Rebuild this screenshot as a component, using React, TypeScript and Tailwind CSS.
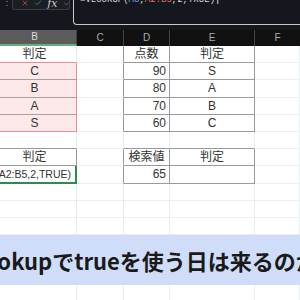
import { X, Check, ChevronDown } from "lucide-react";

type CellSpec = {
  text?: string;
  cls?: string;
  small?: boolean;
};

const grid = "border-r border-b border-r-[#e6edf3] border-b-[#eceff2]";

const base = "h-[17.2px] flex items-center leading-none text-[#333] overflow-hidden whitespace-nowrap";

// columns B..F
const rows: CellSpec[][] = [
  [
    { text: "判定", cls: "justify-center pr-[7px] border-r border-b border-r-[#e6edf3] border-b-[#f28b8b]" },
    { cls: "border-r border-b border-r-[#9a9a9a] border-b-[#eceff2]" },
    { text: "点数", cls: "justify-center border-r border-b border-[#9a9a9a]" },
    { text: "判定", cls: "justify-center border-r border-b border-[#9a9a9a]" },
    { cls: grid },
  ],
  [
    { text: "C", cls: "justify-center pr-[7px] bg-[#fde9ea] border-r border-b border-r-[#f28b8b] border-b-[#a9a0a1]" },
    { cls: "border-r border-b border-r-[#9a9a9a] border-b-[#eceff2]" },
    { text: "90", cls: "justify-end pr-[3px] border-r border-b border-[#9a9a9a]" },
    { text: "S", cls: "justify-center border-r border-b border-[#9a9a9a]" },
    { cls: grid },
  ],
  [
    { text: "B", cls: "justify-center pr-[7px] bg-[#fde9ea] border-r border-b border-r-[#f28b8b] border-b-[#a9a0a1]" },
    { cls: "border-r border-b border-r-[#9a9a9a] border-b-[#eceff2]" },
    { text: "80", cls: "justify-end pr-[3px] border-r border-b border-[#9a9a9a]" },
    { text: "A", cls: "justify-center border-r border-b border-[#9a9a9a]" },
    { cls: grid },
  ],
  [
    { text: "A", cls: "justify-center pr-[7px] bg-[#fde9ea] border-r border-b border-r-[#f28b8b] border-b-[#a9a0a1]" },
    { cls: "border-r border-b border-r-[#9a9a9a] border-b-[#eceff2]" },
    { text: "70", cls: "justify-end pr-[3px] border-r border-b border-[#9a9a9a]" },
    { text: "B", cls: "justify-center border-r border-b border-[#9a9a9a]" },
    { cls: grid },
  ],
  [
    { text: "S", cls: "justify-center pr-[7px] bg-[#fde9ea] border-r border-b border-r-[#f28b8b] border-b-[#f28b8b]" },
    { cls: "border-r border-b border-r-[#9a9a9a] border-b-[#eceff2]" },
    { text: "60", cls: "justify-end pr-[3px] border-r border-b border-[#9a9a9a]" },
    { text: "C", cls: "justify-center border-r border-b border-[#9a9a9a]" },
    { cls: grid },
  ],
  [
    { cls: "border-r border-b border-r-[#e6edf3] border-b-[#9a9a9a]" },
    { cls: grid },
    { cls: "border-r border-b border-r-[#e6edf3] border-b-[#9a9a9a]" },
    { cls: "border-r border-b border-r-[#e6edf3] border-b-[#9a9a9a]" },
    { cls: grid },
  ],
  [
    { text: "判定", cls: "justify-center pr-[7px] border-r border-b border-[#9a9a9a]" },
    { cls: "border-r border-b border-r-[#9a9a9a] border-b-[#eceff2]" },
    { text: "検索値", cls: "justify-center border-r border-b border-[#9a9a9a]" },
    { text: "判定", cls: "justify-center border-r border-b border-[#9a9a9a]" },
    { cls: grid },
  ],
  [
    { text: "=VLOOKUP(A8,A2:B5,2,TRUE)", small: true, cls: "justify-end pr-[4px] border-r-2 border-b-2 border-[#2f8a4c]" },
    { cls: "border-r border-b border-r-[#9a9a9a] border-b-[#eceff2]" },
    { text: "65", cls: "justify-end pr-[3px] border-r border-b border-[#9a9a9a]" },
    { text: "", cls: "justify-center border-r border-b border-[#9a9a9a]" },
    { cls: grid },
  ],
];

const emptyRow: CellSpec[] = [
  { cls: grid },
  { cls: grid },
  { cls: grid },
  { cls: grid },
  { cls: grid },
];

const allRows = [...rows, emptyRow, emptyRow, emptyRow];

const cols = "grid grid-cols-[77px_47px_46px_85px_45px]";

function Row({ cells }: { cells: CellSpec[] }) {
  return (
    <div className={cols}>
      {cells.map((c, i) => (
        <div key={i} className={`${base} ${c.small ? "text-[10.5px]" : "text-[12px]"} ${c.cls ?? ""}`}>
          {c.text}
        </div>
      ))}
    </div>
  );
}

export default function App() {
  return (
    <div className="w-[300px] h-[300px] overflow-hidden bg-white font-['Liberation_Sans','Noto_Sans_CJK_JP',sans-serif]">
      {/* formula bar */}
      <div className="h-[30px] bg-[#14171e] flex items-start">
        <div className="w-[12px] text-[#888] text-[10px] leading-none -mt-[3px] pl-[2px]">⋮</div>
        <div className="w-[58px] h-[10px] border border-t-0 border-[#3b3e46] rounded-b-[3px] bg-[#1b1e25] flex items-end gap-[5px] pl-[8px] pb-[1px] overflow-hidden">
          <X className="w-[10px] h-[10px] text-[#e05252]" strokeWidth={2} />
          <Check className="w-[10px] h-[10px] text-[#4caf6a]" strokeWidth={2} />
          <span className="text-[#ccc] text-[11px] leading-none italic font-['DejaVu_Serif',serif] -mb-[1px]">fx</span>
          <ChevronDown className="w-[8px] h-[8px] text-[#aaa]" />
        </div>
        <div className="ml-[3px] flex-1 h-[25px] border-l border-b border-[#c8c8c8] rounded-bl-[4px] overflow-hidden">
          <div className="-mt-[5px] pl-[6px] text-[9px] leading-[10px] font-['Liberation_Mono',monospace] text-[#d8d8d8] whitespace-nowrap">
            =VLOOKUP(<span className="text-[#6ea8e6]">A8</span>,<span className="text-[#e07070]">A2:B5</span>,2,TRUE)<span className="text-white">|</span>
          </div>
        </div>
      </div>

      {/* column headers */}
      <div className={`${cols} h-[16px] bg-[#111] text-[10px] leading-none`}>
        <div className="flex items-center justify-center pr-[7px] bg-[#5c5c5c] text-[#ddd] border-b-2 border-[#5fb07a] border-r border-r-[#444]">B</div>
        <div className="flex items-center justify-center text-[#aaa] border-r border-[#444]">C</div>
        <div className="flex items-center justify-center text-[#aaa] border-r border-[#444]">D</div>
        <div className="flex items-center justify-center text-[#aaa] border-r border-[#444]">E</div>
        <div className="flex items-center justify-center text-[#aaa]">F</div>
      </div>

      {allRows.slice(0, 11).map((r, i) => (
        <Row key={i} cells={r} />
      ))}

      {/* title banner */}
      <div className="h-[50px] bg-[#d0ddf9] flex items-center overflow-hidden">
        <div className="ml-[-36px] whitespace-nowrap text-[22px] font-bold text-[#1a1a1a] leading-none font-['Noto_Sans_CJK_JP',sans-serif]">
          vlookupでtrueを使う日は来るのか
        </div>
      </div>

      <Row cells={emptyRow} />
    </div>
  );
}
